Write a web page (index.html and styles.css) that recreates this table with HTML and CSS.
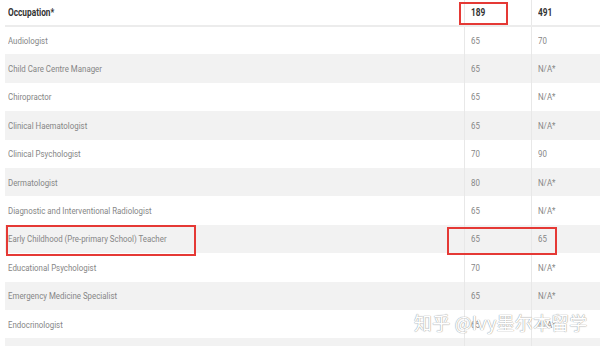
FILE: index.html
```html
<!DOCTYPE html>
<html>
<head>
<meta charset="utf-8">
<link rel="stylesheet" href="styles.css">
</head>
<body>
<div class="page">
  <table class="occ">
    <colgroup><col class="c1"><col class="c2"><col class="c3"></colgroup>
    <thead>
      <tr><th><span class="t">Occupation*</span></th><th><span class="t">189</span></th><th><span class="t">491</span></th></tr>
    </thead>
    <tbody>
      <tr><td><span class="t">Audiologist</span></td><td><span class="t">65</span></td><td><span class="t">70</span></td></tr>
      <tr><td><span class="t">Child Care Centre Manager</span></td><td><span class="t">65</span></td><td><span class="t">N/A*</span></td></tr>
      <tr><td><span class="t">Chiropractor</span></td><td><span class="t">65</span></td><td><span class="t">N/A*</span></td></tr>
      <tr><td><span class="t">Clinical Haematologist</span></td><td><span class="t">65</span></td><td><span class="t">N/A*</span></td></tr>
      <tr><td><span class="t">Clinical Psychologist</span></td><td><span class="t">70</span></td><td><span class="t">90</span></td></tr>
      <tr><td><span class="t">Dermatologist</span></td><td><span class="t">80</span></td><td><span class="t">N/A*</span></td></tr>
      <tr><td><span class="t">Diagnostic and Interventional Radiologist</span></td><td><span class="t">65</span></td><td><span class="t">N/A*</span></td></tr>
      <tr><td><span class="t">Early Childhood (Pre-primary School) Teacher</span></td><td><span class="t">65</span></td><td><span class="t">65</span></td></tr>
      <tr><td><span class="t">Educational Psychologist</span></td><td><span class="t">70</span></td><td><span class="t">N/A*</span></td></tr>
      <tr><td><span class="t">Emergency Medicine Specialist</span></td><td><span class="t">65</span></td><td><span class="t">N/A*</span></td></tr>
      <tr><td><span class="t">Endocrinologist</span></td><td><span class="t">65</span></td><td><span class="t">N/A*</span></td></tr>
      <tr><td>&nbsp;</td><td></td><td></td></tr>
    </tbody>
  </table>
  <div class="mark mark-189"></div>
  <div class="mark mark-name"></div>
  <div class="mark mark-vals"></div>
  <div class="watermark">知乎 @Ivy墨尔本留学</div>
</div>
</body>
</html>
```

FILE: styles.css
```css
html, body {
  margin: 0;
  padding: 0;
  background: #fff;
}
.page {
  position: relative;
  width: 600px;
  height: 346px;
  overflow: hidden;
  font-family: Roboto, "Liberation Sans", sans-serif;
}
.occ {
  margin-left: 5px;
  width: 595px;
  border-collapse: collapse;
  table-layout: fixed;
}
.c1 { width: 459px; }
.c2 { width: 67px; }
.c3 { width: 69px; }
.t {
  display: inline-block;
  transform: scaleX(0.83);
  transform-origin: left center;
  white-space: nowrap;
}
.occ th {
  height: 25px;
  padding: 0 0 0 3px;
  text-align: left;
  font-size: 10px;
  font-weight: 700;
  color: #333;
  border-bottom: 2px solid #ececec;
}
.occ td {
  height: 28.4px;
  padding: 0 0 0 3px;
  font-size: 9.5px;
  color: #868686;
  box-sizing: border-box;
}
.occ th + th,
.occ td + td {
  border-left: 1px solid #e8e8e8;
  padding-left: 6px;
}
.occ tbody tr:nth-child(even) td {
  background: #f2f2f2;
}
.mark {
  position: absolute;
  border: 2px solid #e53935;
  box-sizing: border-box;
}
.mark-189 { left: 459px; top: 2px; width: 49px; height: 23px; }
.mark-name { left: 6px; top: 225px; width: 190px; height: 31px; }
.mark-vals { left: 447px; top: 227px; width: 110px; height: 28px; }
.watermark {
  position: absolute;
  left: 414px;
  top: 310px;
  font-family: "Noto Sans CJK SC", sans-serif;
  font-size: 18px;
  line-height: 24px;
  letter-spacing: 0.2px;
  color: #fff;
  text-shadow: 0 0 1px #9a9a9a, 0 0 1px #a5a5a5;
  white-space: nowrap;
}
```
